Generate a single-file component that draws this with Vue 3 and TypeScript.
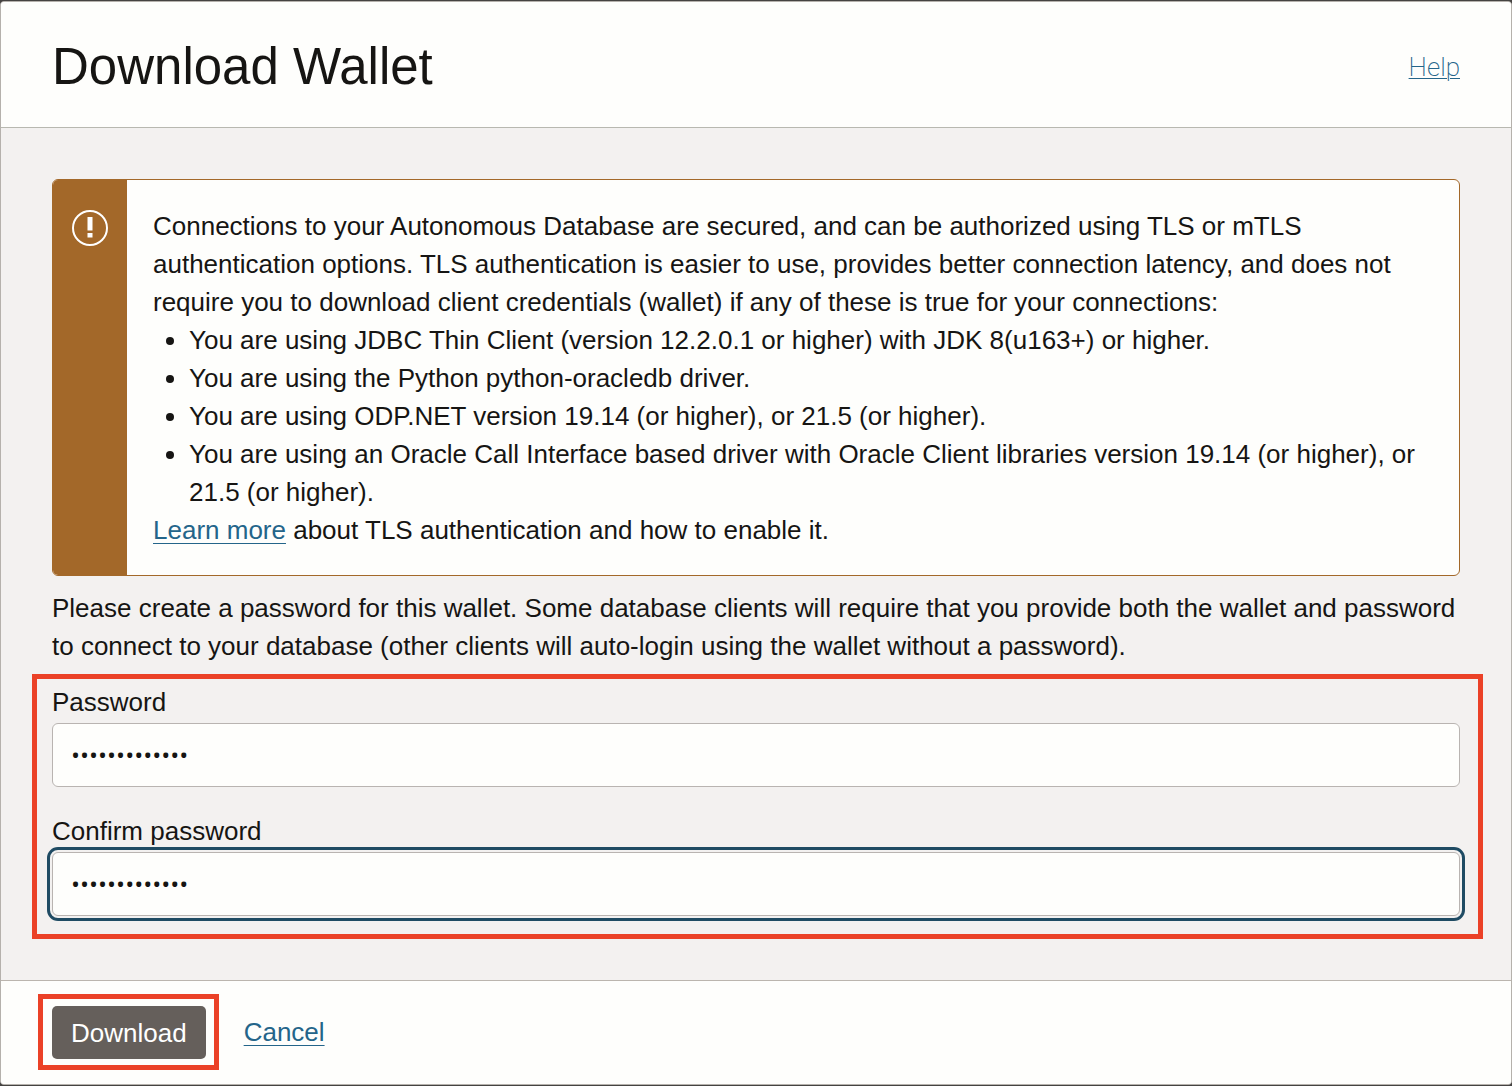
<script setup lang="ts">
import { ref } from 'vue'

const requirements: string[] = [
  'You are using JDBC Thin Client (version 12.2.0.1 or higher) with JDK 8(u163+) or higher.',
  'You are using the Python python-oracledb driver.',
  'You are using ODP.NET version 19.14 (or higher), or 21.5 (or higher).',
  'You are using an Oracle Call Interface based driver with Oracle Client libraries version 19.14 (or higher), or 21.5 (or higher).',
]

const password = ref('Welcome_12345')
const confirmation = ref('Welcome_12345')
</script>

<template>
  <main class="dialog">
    <header class="dialog-header">
      <h1>Download Wallet</h1>
      <a class="help" href="#help">Help</a>
    </header>

    <form id="wallet-form" class="dialog-body" @submit.prevent>
      <section class="notice">
        <div class="notice-side">
          <svg width="36" height="36" viewBox="0 0 36 36" aria-hidden="true">
            <circle cx="18" cy="18" r="17" fill="none" stroke="#fff" stroke-width="2" />
            <rect x="15.5" y="7" width="5" height="13.5" fill="#fff" />
            <rect x="15.5" y="23" width="5" height="4.5" fill="#fff" />
          </svg>
        </div>
        <div class="notice-text">
          <p>
            Connections to your Autonomous Database are secured, and can be authorized using TLS or mTLS
            authentication options. TLS authentication is easier to use, provides better connection latency, and does not
            require you to download client credentials (wallet) if any of these is true for your connections:
          </p>
          <ul>
            <li v-for="item in requirements" :key="item">{{ item }}</li>
          </ul>
          <p><a href="#tls">Learn more</a> about TLS authentication and how to enable it.</p>
        </div>
      </section>

      <p class="intro">
        Please create a password for this wallet. Some database clients will require that you provide both the wallet and password
        to connect to your database (other clients will auto-login using the wallet without a password).
      </p>

      <div class="fields marked">
        <div class="field">
          <label for="password">Password</label>
          <input id="password" v-model="password" type="password" autocomplete="new-password" />
        </div>
        <div class="field">
          <label for="confirm">Confirm password</label>
          <input id="confirm" v-model="confirmation" class="focused" type="password" autocomplete="new-password" />
        </div>
      </div>
    </form>

    <footer class="dialog-footer">
      <div class="action marked">
        <button type="submit" form="wallet-form">Download</button>
      </div>
      <a href="#cancel">Cancel</a>
    </footer>
  </main>
</template>

<style>
body {
  margin: 0;
  background: #454341;
}
</style>

<style scoped>
.dialog {
  box-sizing: border-box;
  margin: 1px 0;
  border: 1px solid #b5b1ac;
  border-radius: 4px;
  overflow: hidden;
  background: #f3f1f0;
  color: #161513;
  font: 26px/38px "Liberation Sans", Arial, sans-serif;
}

h1,
p,
ul {
  margin: 0;
}

a {
  color: #24658a;
  text-decoration: underline;
  text-decoration-thickness: 1px;
  text-underline-offset: 4px;
}

.dialog-header {
  display: flex;
  align-items: center;
  justify-content: space-between;
  padding: 34px 51px 29px;
  border-bottom: 1px solid #b8b8b0;
  background: #fefefc;
}

h1 {
  font-size: 51px;
  line-height: 62px;
  font-weight: 400;
}

.help {
  font-family: Roboto, "Liberation Sans", sans-serif;
  font-weight: 200;
  text-underline-offset: 2px;
}

.dialog-body {
  padding: 51px 28px 41px 31px;
}

.notice {
  display: flex;
  margin: 0 23px 0 20px;
  border: 1px solid #a36829;
  border-radius: 6px;
  overflow: hidden;
  background: #fefefc;
}

.notice-side {
  flex: none;
  display: flex;
  justify-content: center;
  width: 74px;
  padding-top: 30px;
  background: #a36829;
}

.notice-text {
  flex: 1;
  padding: 27px 26px 26px;
}

ul {
  padding-left: 36px;
}

.intro {
  margin: 13px 23px 9px 20px;
}

.marked {
  border: 5px solid #eb4127;
}

.fields {
  display: flex;
  flex-direction: column;
  gap: 25px;
  padding: 4px 18px 18px 15px;
}

.field {
  display: flex;
  flex-direction: column;
}

label {
  padding-bottom: 2px;
}

input {
  box-sizing: border-box;
  width: 100%;
  height: 64px;
  margin: 0;
  padding: 0 18px 2px;
  border: 1px solid #b9b4b1;
  border-radius: 6px;
  background: #fefefc;
  color: #161513;
  font: 24px/38px "Open Sans", "Noto Sans", sans-serif;
}

.focused {
  outline: 3px solid #1f4b63;
  outline-offset: 2px;
}

.dialog-footer {
  display: flex;
  align-items: center;
  gap: 25px;
  padding: 13px 37px 14px;
  border-top: 1px solid #bbb5ae;
  background: #fefefc;
}

.action {
  display: flex;
  padding: 7px 8px 6px 9px;
}

button {
  height: 53px;
  padding: 0 19px;
  border: 0;
  border-radius: 5px;
  background: #655f5b;
  color: #fff;
  font: inherit;
}
</style>
